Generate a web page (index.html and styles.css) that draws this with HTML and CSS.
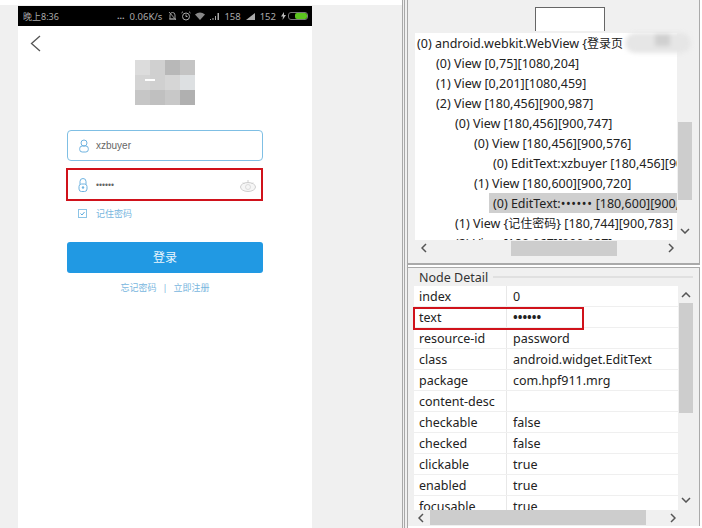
FILE: index.html
```html
<!DOCTYPE html>
<html lang="zh">
<head>
<meta charset="utf-8">
<title>Login and node detail</title>
<link rel="stylesheet" href="styles.css">
</head>
<body>
<div class="screen">
  <section class="stage">
    <div class="phone">
      <div class="status">
        <span class="time">晚上8:36</span>
        <span class="status-right">
          <span class="dots">...</span>
          <span class="speed">0.06K/s</span>
          <svg class="si si-bell" viewBox="0 0 9 10"><path d="M2 8V4a2.5 2.5 0 0 1 5 0v4zM1 8h7M1 1l7 8" fill="none" stroke="#999" stroke-width="1"/></svg>
          <svg class="si si-alarm" viewBox="0 0 10 10"><circle cx="5" cy="5.5" r="3.5" fill="none" stroke="#aaa" stroke-width="1"/><path d="M5 3.5v2h1.5M0.5 2L2 .7M9.500 2L8 .7" fill="none" stroke="#aaa" stroke-width="1"/></svg>
          <svg class="si si-wifi" viewBox="0 0 10 8"><path d="M0 2.500Q5-1.500 10 2.500L5 8z" fill="#888"/></svg>
          <svg class="si si-sig" viewBox="0 0 9 7"><path d="M0 7h1V6H0zM2.500 7h1V5h-1zM5 7h1V3H5zM7.500 7H9V0H7.500z" fill="#aaa"/></svg>
          <span class="num">158</span>
          <svg class="si si-sig" viewBox="0 0 9 7"><path d="M0 7L9 0v7z" fill="#aaa"/></svg>
          <span class="num">152</span>
          <svg class="si si-bolt" viewBox="0 0 5 8"><path d="M3 0L0 4.500h2L1.500 8 5 3H3z" fill="#bbb"/></svg>
          <span class="battery"><span class="battery-fill"></span></span>
        </span>
      </div>
      <div class="content">
        <svg class="back" viewBox="0 0 11 17"><path d="M10 1L1.500 8.500 10 16" fill="none" stroke="#555" stroke-width="1.300"/></svg>
        <svg class="logo" viewBox="0 0 60 45">
          <rect width="15" height="15" fill="#dcdcdc"/><rect x="15" width="15" height="15" fill="#d0d0d0"/><rect x="30" width="15" height="15" fill="#b8b8b8"/><rect x="45" width="15" height="15" fill="#c4c4c4"/>
          <rect y="15" width="15" height="15" fill="#d4d4d4"/><rect x="15" y="15" width="15" height="15" fill="#d0d0d0"/><rect x="30" y="15" width="15" height="15" fill="#d6d6d6"/><rect x="45" y="15" width="15" height="15" fill="#dde0e2"/>
          <rect y="30" width="15" height="15" fill="#c6c6c6"/><rect x="15" y="30" width="15" height="15" fill="#c0c0c0"/><rect x="30" y="30" width="15" height="15" fill="#c8c8c8"/><rect x="45" y="30" width="15" height="15" fill="#b0b0b0"/>
          <rect x="10" y="19" width="10" height="2" fill="#fff"/>
        </svg>
        <div class="field field-active">
          <svg class="field-icon" viewBox="0 0 10 14"><circle cx="5" cy="4" r="3" fill="none" stroke="#6fb3e0" stroke-width="1"/><rect x="0.700" y="7" width="8.600" height="6" rx="2.500" fill="none" stroke="#6fb3e0" stroke-width="1"/></svg>
          <span class="field-text">xzbuyer</span>
        </div>
        <div class="field field-pass">
          <svg class="field-icon" viewBox="0 0 10 14"><path d="M2 6V3.500a3 3 0 0 1 6 0V6" fill="none" stroke="#6fb3e0" stroke-width="1"/><rect x="1" y="6" width="8" height="7.500" rx="2.500" fill="none" stroke="#6fb3e0" stroke-width="1"/><circle cx="5" cy="9.500" r="1.200" fill="#6fb3e0"/></svg>
          <span class="field-text pass-dots">••••••</span>
          <svg class="eye" viewBox="0 0 16 12"><ellipse cx="8" cy="7" rx="7.500" ry="4.500" fill="#f6f6f6" stroke="#cfcfcf" stroke-width="1"/><circle cx="8" cy="7" r="2.500" fill="none" stroke="#dcdcdc" stroke-width="1"/><path d="M3 2.500L4.500 4M8 0v2.500M13 2.500L11.500 4" stroke="#cfcfcf" stroke-width="1"/></svg>
          <span class="red-mark red-pass"></span>
        </div>
        <div class="remember">
          <svg class="check" viewBox="0 0 9 9"><rect x="0.500" y="0.500" width="8" height="8" fill="none" stroke="#8cc4e6" stroke-width="1"/><path d="M2.500 4.500l1.500 1.500 2.500-3" fill="none" stroke="#5aa8dc" stroke-width="1"/></svg>
          <span>记住密码</span>
        </div>
        <div class="login-btn">登录</div>
        <div class="links"><span>忘记密码</span><span>|</span><span>立即注册</span></div>
      </div>
    </div>
  </section>
  <div class="splitter"></div>
  <section class="inspector">
    <div class="tree-panel">
      <div class="mini-box"></div>
      <div class="tree-area">
        <div class="tree-row-wrap">
          <div class="tree">
            <div class="tn l0">(0) android.webkit.WebView {<span class="cjk">登录页</span></div>
            <div class="tn l1">(0) View [0,75][1080,204]</div>
            <div class="tn l1">(1) View [0,201][1080,459]</div>
            <div class="tn l1">(2) View [180,456][900,987]</div>
            <div class="tn l2">(0) View [180,456][900,747]</div>
            <div class="tn l3">(0) View [180,456][900,576]</div>
            <div class="tn l4">(0) EditText:xzbuyer [180,456][900,576]</div>
            <div class="tn l3">(1) View [180,600][900,720]</div>
            <div class="tn l4 selected">(0) EditText:<span class="tree-dots">••••••</span> [180,600][900,720]</div>
            <div class="tn l2">(1) View {<span class="cjk">记住密码</span>} [180,744][900,783]</div>
            <div class="tn l2">(2) View [180,967][900,987]</div>
          </div>
          <div class="vbar vbar-tree">
            <div class="vbar-space"></div>
            <div class="vthumb"></div>
            <svg class="arrow arrow-down" viewBox="0 0 10 6"><path d="M1 1l4 4 4-4" fill="none" stroke="#555" stroke-width="1.500"/></svg>
          </div>
        </div>
        <div class="hbar hbar-tree">
          <svg class="arrow-h" viewBox="0 0 6 10"><path d="M5 1L1 5l4 4" fill="none" stroke="#555" stroke-width="1.500"/></svg>
          <div class="hthumb"></div>
          <svg class="arrow-h" viewBox="0 0 6 10"><path d="M1 1l4 4-4 4" fill="none" stroke="#555" stroke-width="1.500"/></svg>
        </div>
      </div>
      <div class="blob"><span class="blob-core"></span></div>
    </div>
    <div class="detail-panel">
      <div class="legend"><span class="legend-text">Node Detail</span><span class="legend-line"></span></div>
      <div class="detail-main">
        <div class="table">
          <div class="tr"><span class="key">index</span><span class="val">0</span></div>
          <div class="tr"><span class="key">text</span><span class="val dots-val">••••••</span></div>
          <div class="tr"><span class="key">resource-id</span><span class="val">password</span></div>
          <div class="tr"><span class="key">class</span><span class="val">android.widget.EditText</span></div>
          <div class="tr"><span class="key">package</span><span class="val">com.hpf911.mrg</span></div>
          <div class="tr"><span class="key">content-desc</span><span class="val"></span></div>
          <div class="tr"><span class="key">checkable</span><span class="val">false</span></div>
          <div class="tr"><span class="key">checked</span><span class="val">false</span></div>
          <div class="tr"><span class="key">clickable</span><span class="val">true</span></div>
          <div class="tr"><span class="key">enabled</span><span class="val">true</span></div>
          <div class="tr"><span class="key">focusable</span><span class="val">true</span></div>
        </div>
        <span class="red-mark red-text"></span>
        <div class="vbar vbar-detail">
          <svg class="arrow arrow-up" viewBox="0 0 10 6"><path d="M1 5l4-4 4 4" fill="none" stroke="#555" stroke-width="1.500"/></svg>
          <div class="vthumb"></div>
          <svg class="arrow arrow-down" viewBox="0 0 10 6"><path d="M1 1l4 4 4-4" fill="none" stroke="#555" stroke-width="1.500"/></svg>
        </div>
      </div>
      <div class="hbar hbar-detail">
        <svg class="arrow-h" viewBox="0 0 6 10"><path d="M5 1L1 5l4 4" fill="none" stroke="#555" stroke-width="1.500"/></svg>
        <div class="hthumb"></div>
        <svg class="arrow-h" viewBox="0 0 6 10"><path d="M1 1l4 4-4 4" fill="none" stroke="#555" stroke-width="1.500"/></svg>
      </div>
    </div>
  </section>
</div>
</body>
</html>
```
FILE: styles.css
```css
* { box-sizing: border-box; }
html, body { margin: 0; padding: 0; background: #fff; overflow: hidden; }
body { font-family: "Noto Sans", "Noto Sans CJK SC", sans-serif; color: #222; }
.screen { display: flex; width: 702px; height: 528px; }

/* left: phone */
.stage { width: 402px; height: 526px; margin-top: 5px; padding: 1px 0 0 18px; background: #f0f0f0; flex: none; }
.phone { width: 294px; height: 100%; background: #fff; display: flex; flex-direction: column; }
.status { height: 20px; background: #000; color: #aaa; display: flex; align-items: center; justify-content: space-between; padding: 0 4px 0 5px; font-size: 9px; flex: none; }
.status-right { display: flex; align-items: center; }
.dots { margin-right: 5px; font-weight: 700; line-height: 6px; }
.speed { margin-right: 6px; font-size: 9.500px; }
.si { display: block; flex: none; }
.si-bell { width: 9px; height: 10px; margin-right: 4px; }
.si-alarm { width: 10px; height: 10px; margin-right: 4px; }
.si-wifi { width: 10px; height: 8px; margin-right: 5px; }
.si-sig { width: 9px; height: 7px; margin-right: 5px; }
.num { margin-right: 5px; font-size: 9.500px; }
.si-bolt { width: 5px; height: 8px; margin-right: 2px; }
.battery { width: 20px; height: 8px; border: 1px solid #777; border-radius: 3px; display: flex; justify-content: flex-end; }
.battery-fill { width: 12px; background: #5cc41f; border-radius: 2px; }
.content { flex: 1; padding: 9px 49px 0; display: flex; flex-direction: column; }
.back { width: 11px; height: 17px; margin-left: -37px; flex: none; }
.logo { width: 60px; height: 45px; margin: 8px 0 0 68px; flex: none; filter: blur(0.4px); }
.field { display: flex; align-items: center; position: relative; width: 196px; padding-left: 11px; flex: none; }
.field-active { height: 31px; margin-top: 25px; border: 1px solid #7fbfe4; border-radius: 4px; }
.field-pass { height: 30px; margin-top: 9px; }
.field-icon { width: 10px; height: 14px; flex: none; }
.field-text { margin-left: 7px; font-family: "Liberation Sans", "Noto Sans CJK SC", sans-serif; font-size: 10px; color: #666; }
.field-pass .field-text { margin-left: 8px; }
.pass-dots { font-size: 8.500px; }
.eye { width: 16px; height: 12px; margin-left: auto; margin-right: 7px; margin-top: 2px; }
.red-mark { position: absolute; border: 2px solid #d0121b; pointer-events: none; }
.red-pass { left: -1px; top: -2px; width: 197px; height: 33px; }
.remember { display: flex; align-items: center; margin-top: 7px; padding-left: 11px; color: #78b6de; font-size: 9px; height: 12px; flex: none; }
.check { width: 9px; height: 9px; margin-right: 9px; }
.login-btn { width: 196px; height: 31px; margin-top: 23px; padding-bottom: 1px; background: #2199e3; border-radius: 3px; color: #e8f5fd; font-size: 12px; display: flex; align-items: center; justify-content: center; flex: none; }
.links { width: 196px; margin-top: 8px; display: flex; justify-content: center; gap: 6px; font-size: 9px; line-height: 14px; color: #78b6de; }

/* splitter */
.splitter { width: 6px; flex: none; background: linear-gradient(to right, #a8a8a8 0 1px, #f0f0f0 1px 2px, #a8a8a8 2px 3px, #f0f0f0 3px 5px, #a8a8a8 5px 6px); }

/* right */
.inspector { width: 292px; flex: none; display: flex; flex-direction: column; font-size: 12.500px; color: #222; }
.tree-panel { position: relative; height: 265px; flex: none; background: #f0f0f0; border-right: 1px solid #aaa; border-bottom: 2px solid #aaa; padding-top: 7px; }
.mini-box { width: 70px; height: 24px; margin-left: 127px; background: #fff; border: 1px solid #666; border-bottom: 0; }
.tree-area { width: 277px; margin: 2px 0 0 7px; }
.tree-row-wrap { display: flex; height: 207px; }
.tree { width: 262px; height: 207px; background: #fff; overflow: hidden; flex: none; }
.tn { height: 20px; padding-top: 1px; line-height: 19px; white-space: nowrap; overflow: hidden; }
.cjk { font-size: 12px; }
.tree-dots { letter-spacing: 0.6px; }
.l0 { padding-left: 2px; }
.l1 { padding-left: 21px; }
.l2 { padding-left: 40px; }
.l3 { padding-left: 59px; }
.l4 { padding-left: 78px; }
.selected { margin-left: 74px; padding-left: 4px; background: #cfcfcf; }
.vbar { width: 15px; flex: none; display: flex; flex-direction: column; align-items: center; background: #f0f0f0; }
.vbar-tree .vbar-space { height: 89px; flex: none; }
.vbar-tree .vthumb { height: 78px; }
.vthumb { width: 14px; background: #cdcdcd; flex: none; }
.arrow { width: 10px; height: 6px; flex: none; display: block; }
.vbar-tree .arrow-down { margin-top: 28px; }
.hbar { display: flex; align-items: center; background: #f0f0f0; flex: none; }
.hbar-tree { height: 16px; width: 262px; padding: 0 6px; }
.arrow-h { width: 6px; height: 10px; flex: none; display: block; }
.hthumb { height: 15px; background: #cdcdcd; flex: none; }
.hbar-tree .hthumb { width: 106px; margin: 0 51px 0 84px; }
.blob { position: absolute; left: 217px; top: 33px; width: 66px; height: 20px; border-radius: 10px; background: #e6e6e6; filter: blur(2px); }
.blob-core { display: block; width: 15px; height: 12px; margin: 1px 0 0 30px; background: #d0d0d0; }

.detail-panel { height: 259px; flex: none; margin-top: 2px; background: #f0f0f0; border-top: 1px solid #aaa; border-right: 1px solid #aaa; padding: 0 0 0 6px; }
.legend { display: flex; align-items: center; height: 18px; padding-left: 5px; }
.legend-text { flex: none; color: #333; }
.legend-line { flex: 1; height: 2px; background: #e0e0e0; margin: 0 6px 0 5px; }
.detail-main { position: relative; display: flex; height: 224px; }
.table { width: 264px; height: 224px; background: #fff; overflow: hidden; flex: none; }
.tr { display: flex; height: 21px; line-height: 22px; border-bottom: 1px solid #efefef; white-space: nowrap; }
.key { width: 93px; padding-left: 5px; border-right: 1px solid #e8e8e8; flex: none; }
.val { padding-left: 6px; }
.dots-val { font-size: 12.500px; font-weight: 700; }
.red-text { left: -1px; top: 21px; width: 171px; height: 23px; border-color: #d0121b; }
.vbar-detail { width: 16px; }
.vbar-detail .arrow-up { margin-top: 6px; }
.vbar-detail .vthumb { height: 110px; margin-top: 5px; }
.vbar-detail .arrow-down { margin-top: 84px; }
.hbar-detail { height: 15px; width: 264px; padding: 0 4px 0 4px; }
.hbar-detail .hthumb { width: 216px; margin: 0 24px 0 6px; }
```
